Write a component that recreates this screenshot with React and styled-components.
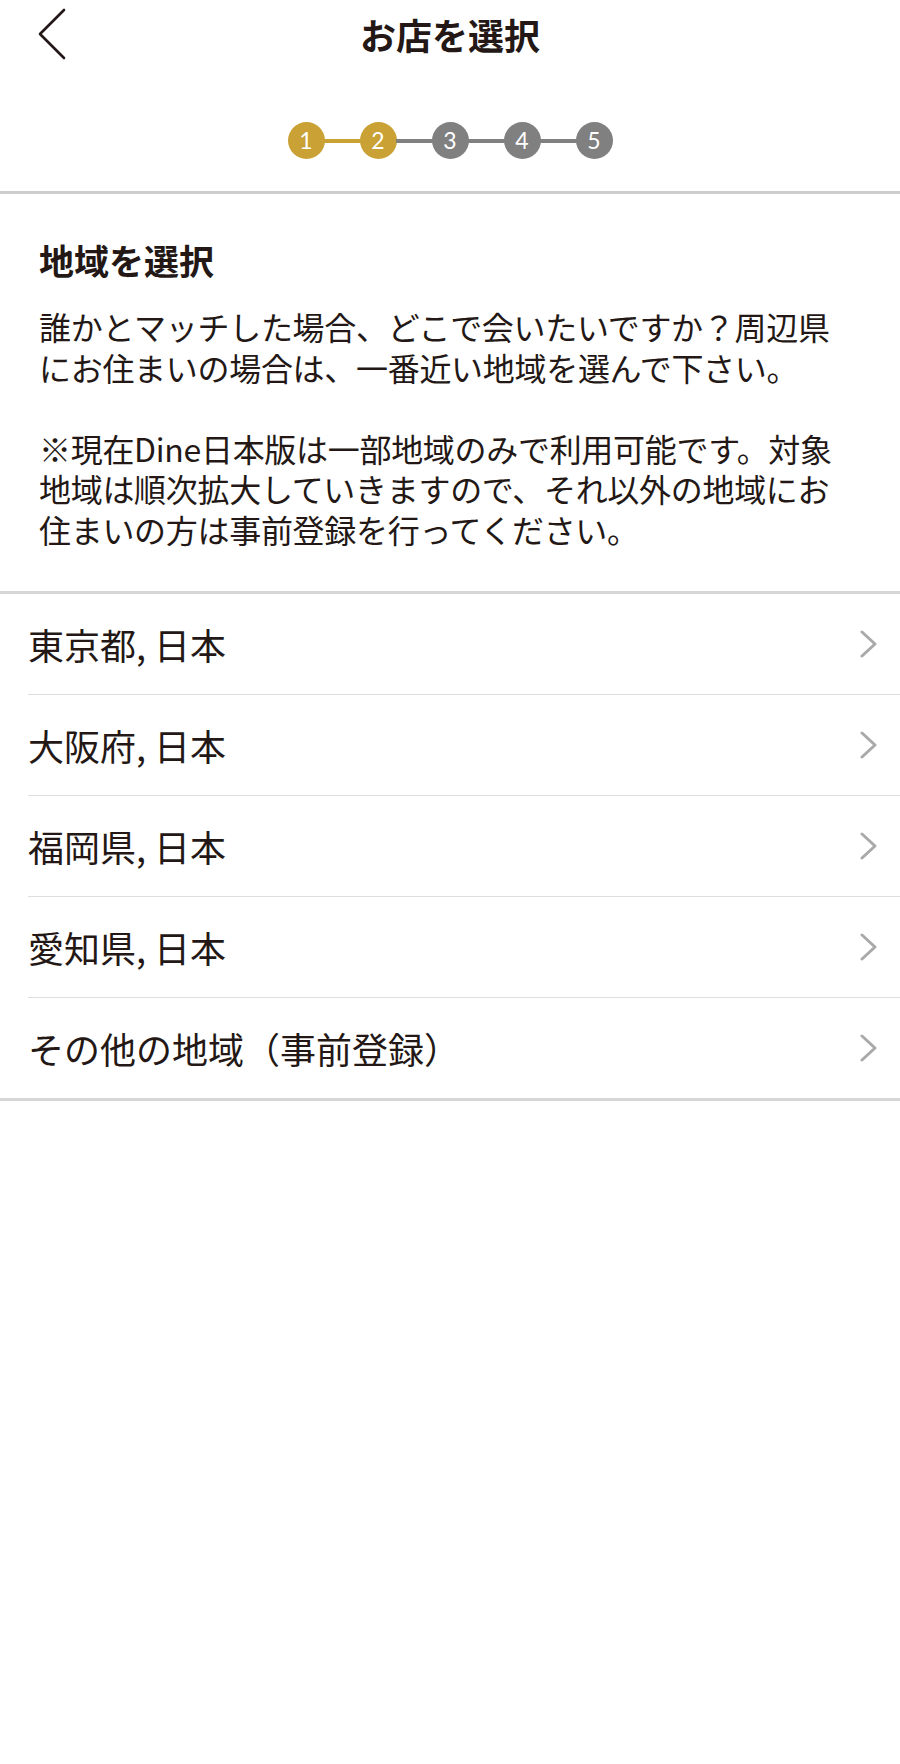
import React from 'react';
import styled, { createGlobalStyle } from 'styled-components';

const GlobalStyle = createGlobalStyle`
  html, body {
    margin: 0;
    padding: 0;
    background: #ffffff;
  }
  body {
    font-family: "Noto Sans CJK JP", "Noto Sans", sans-serif;
    color: #231815;
  }
`;

const Page = styled.div`
  width: 900px;
  min-height: 1764px;
  background: #ffffff;
`;

const Header = styled.header`
  position: relative;
  height: 68px;
  display: flex;
  align-items: center;
  justify-content: center;
`;

const BackButton = styled.button`
  position: absolute;
  left: 34px;
  top: 6px;
  width: 36px;
  height: 56px;
  padding: 0;
  border: none;
  background: none;
  display: flex;
  align-items: center;
  justify-content: center;
  cursor: pointer;
`;

const Title = styled.h1`
  margin: 0;
  font-size: 36px;
  font-weight: 700;
  line-height: 1;
`;

const Stepper = styled.div`
  display: flex;
  align-items: center;
  justify-content: center;
  padding: 54px 0 32px;
  border-bottom: 3px solid #cdcdcd;
`;

const Step = styled.div`
  width: 37px;
  height: 37px;
  border-radius: 50%;
  background: ${p => (p.active ? '#c9a134' : '#808080')};
  color: #ffffff;
  display: flex;
  align-items: center;
  justify-content: center;
  font-family: "Lato", "Open Sans", sans-serif;
  font-size: 23px;
  line-height: 1;
`;

const Connector = styled.div`
  width: 37px;
  height: 4px;
  margin: 0 -1px;
  background: ${p => (p.active ? '#c9a134' : '#808080')};
`;

const Intro = styled.section`
  padding: 44px 39px 42px;
  border-bottom: 3px solid #d6d6d6;
`;

const Heading = styled.h2`
  margin: 0 0 24px;
  font-size: 35px;
  font-weight: 700;
  line-height: 44px;
`;

const Paragraph = styled.p`
  margin: 0;
  font-size: 32px;
  line-height: 40.5px;
  white-space: nowrap;
  letter-spacing: -0.3px;

  & + & {
    margin-top: 40.5px;
  }
`;

const List = styled.ul`
  list-style: none;
  margin: 0;
  padding: 0 0 0 28px;
  border-bottom: 3px solid #d6d6d6;
`;

const Row = styled.li`
  height: 100px;
  display: flex;
  align-items: center;
  justify-content: space-between;
  padding-right: 22px;
  font-size: 36px;
  cursor: pointer;

  & + & {
    border-top: 1.5px solid #dddddd;
  }
`;

const Chevron = ({ color = '#a9a9a9', w = 18, h = 28, stroke = 3 }) => (
  <svg width={w} height={h} viewBox={`0 0 ${w} ${h}`} fill="none">
    <polyline
      points={`2,2 ${w - 3},${h / 2} 2,${h - 2}`}
      stroke={color}
      strokeWidth={stroke}
      strokeLinecap="round"
      strokeLinejoin="round"
    />
  </svg>
);

const BackIcon = () => (
  <svg width="30" height="52" viewBox="0 0 30 52" fill="none">
    <polyline
      points="27,2 3,26 27,50"
      stroke="#231815"
      strokeWidth="2.6"
      strokeLinecap="round"
      strokeLinejoin="round"
    />
  </svg>
);

const regions = [
  '東京都, 日本',
  '大阪府, 日本',
  '福岡県, 日本',
  '愛知県, 日本',
  'その他の地域（事前登録）',
];

const steps = [1, 2, 3, 4, 5];
const currentStep = 2;

export default function App() {
  return (
    <Page>
      <GlobalStyle />
      <Header>
        <BackButton aria-label="戻る">
          <BackIcon />
        </BackButton>
        <Title>お店を選択</Title>
      </Header>

      <Stepper>
        {steps.map((n, i) => (
          <React.Fragment key={n}>
            {i > 0 && <Connector active={n <= currentStep} />}
            <Step active={n <= currentStep}>{n}</Step>
          </React.Fragment>
        ))}
      </Stepper>

      <Intro>
        <Heading>地域を選択</Heading>
        <Paragraph>
          誰かとマッチした場合、どこで会いたいですか？周辺県
          <br />
          にお住まいの場合は、一番近い地域を選んで下さい。
        </Paragraph>
        <Paragraph>
          ※現在Dine日本版は一部地域のみで利用可能です。対象
          <br />
          地域は順次拡大していきますので、それ以外の地域にお
          <br />
          住まいの方は事前登録を行ってください。
        </Paragraph>
      </Intro>

      <List>
        {regions.map(r => (
          <Row key={r}>
            <span>{r}</span>
            <Chevron />
          </Row>
        ))}
      </List>
    </Page>
  );
}
